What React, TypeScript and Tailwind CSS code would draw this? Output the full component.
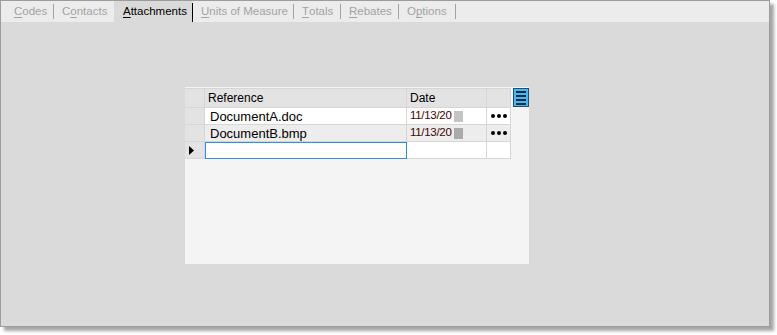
const tabs = [
  { pre: '', key: 'C', post: 'odes', w: 'w-[47px]', pl: 'pl-[8px]', sep: 'gray' },
  { pre: 'C', key: 'o', post: 'ntacts', w: 'w-[60px]', pl: 'pl-[8px]', sep: 'none' },
  { pre: '', key: 'A', post: 'ttachments', w: 'w-[78px]', pl: 'pl-[9px]', sep: 'black', active: true },
  { pre: '', key: 'U', post: 'nits of Measure', w: 'w-[100px]', pl: 'pl-[8px]', sep: 'gray' },
  { pre: '', key: 'T', post: 'otals', w: 'w-[46px]', pl: 'pl-[8px]', sep: 'gray' },
  { pre: '', key: 'R', post: 'ebates', w: 'w-[57px]', pl: 'pl-[8px]', sep: 'gray' },
  { pre: 'O', key: 'p', post: 'tions', w: 'w-[56px]', pl: 'pl-[8px]', sep: 'gray' },
];

const rows = [
  { name: 'DocumentA.doc', date: '11/13/20', bg: 'bg-white', block: 'bg-[#c4c4c4]' },
  { name: 'DocumentB.bmp', date: '11/13/20', bg: 'bg-[#ededed]', block: 'bg-[#ababab]' },
];

const cell = 'border-r border-b border-[#d6d6d6]';

export default function App() {
  return (
    <div className="h-[335px] w-[777px] bg-white" style={{ fontFamily: '"Liberation Sans", Arial, sans-serif' }}>
      <div className="flex h-[327px] w-[770px] flex-col border border-[#9c9c9c] bg-[#dadada] shadow-[4px_4px_3px_rgba(0,0,0,0.35)]">
        {/* tab strip */}
        <div className="flex h-[21px] shrink-0 items-stretch bg-[#ececec] pl-[5px] text-[11.5px]">
          {tabs.map((t) => (
            <div key={t.key + t.post} className="flex items-stretch">
              <div
                className={`${t.w} ${t.pl} flex items-center whitespace-nowrap pt-px ${
                  t.active ? 'bg-[#dadada] text-black' : 'text-[#a3a3a3]'
                }`}
              >
                {t.pre}
                <u className="underline-offset-[2px]">{t.key}</u>
                {t.post}
              </div>
              {t.sep === 'gray' && <div className="my-[3px] w-px bg-[#a3a3a3]" />}
              {t.sep === 'black' && <div className="mt-[2px] w-px bg-black" />}
            </div>
          ))}
        </div>

        {/* content */}
        <div className="flex-1 pl-[184px] pt-[65px]">
          <div className="flex h-[177px] w-[344px] bg-[#f4f4f4] pt-px">
            <div className="flex flex-col">
              {/* header */}
              <div className="flex h-[20px] bg-[#e3e3e3] text-[12px] text-black">
                <div className={`w-[20px] ${cell} border-t`} />
                <div className={`w-[202px] ${cell} border-t flex items-center pl-[3px]`}>Reference</div>
                <div className={`w-[80px] ${cell} border-t flex items-center pl-[3px]`}>Date</div>
                <div className={`w-[24px] ${cell} border-t`} />
              </div>
              {rows.map((r) => (
                <div key={r.name} className={`flex h-[17px] ${r.bg}`}>
                  <div className={`w-[20px] ${cell} bg-[#e3e3e3]`} />
                  <div className={`w-[202px] ${cell} flex items-center pl-[5px] pt-[2px] text-[13px] text-black`}>{r.name}</div>
                  <div className={`w-[80px] ${cell} flex items-center pl-[3px] text-[11.5px] tracking-[-0.3px] text-[#420404]`}>
                    {r.date}
                    <span className={`ml-[2px] h-[11px] w-[9px] ${r.block}`} />
                  </div>
                  <div className={`w-[24px] ${cell} flex items-center justify-center gap-[2px] pl-px`}>
                    <span className="h-[4px] w-[4px] rounded-full bg-black" />
                    <span className="h-[4px] w-[4px] rounded-full bg-black" />
                    <span className="h-[4px] w-[4px] rounded-full bg-black" />
                  </div>
                </div>
              ))}
              {/* new row */}
              <div className="flex h-[17px] bg-white">
                <div className={`w-[20px] ${cell} flex items-center bg-[#e3e3e3] pl-[4px]`}>
                  <svg width="6" height="9" viewBox="0 0 6 9">
                    <path d="M0 0 L5 4.5 L0 9 Z" fill="#000" />
                  </svg>
                </div>
                <div className="w-[202px] border border-[#2f8fe8]" />
                <div className={`w-[80px] ${cell}`} />
                <div className={`w-[24px] ${cell}`} />
              </div>
            </div>
            {/* column chooser button */}
            <div className="ml-[2px] flex h-[19px] w-[16px] flex-col justify-center gap-[2px] border border-[#1e4f72] bg-[#4ab6ec] px-[2px]">
              <div className="h-[2px] bg-[#10304a]" />
              <div className="h-[2px] bg-[#10304a]" />
              <div className="h-[2px] bg-[#10304a]" />
              <div className="h-[2px] bg-[#10304a]" />
            </div>
          </div>
        </div>
      </div>
    </div>
  );
}
